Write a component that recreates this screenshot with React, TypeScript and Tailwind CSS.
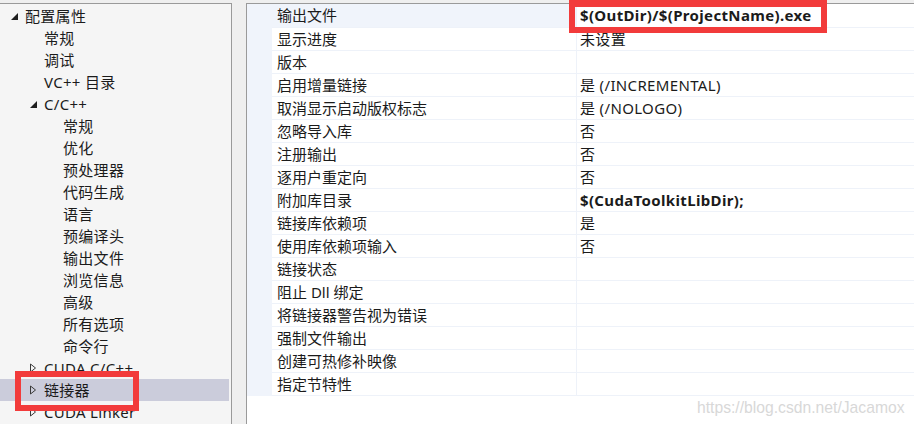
import React from 'react';

type TreeItem = { label: string; level: number; toggle?: 'open' | 'closed'; selected?: boolean };

const tree: TreeItem[] = [
  { label: '配置属性', level: 0, toggle: 'open' },
  { label: '常规', level: 1 },
  { label: '调试', level: 1 },
  { label: 'VC++ 目录', level: 1 },
  { label: 'C/C++', level: 1, toggle: 'open' },
  { label: '常规', level: 2 },
  { label: '优化', level: 2 },
  { label: '预处理器', level: 2 },
  { label: '代码生成', level: 2 },
  { label: '语言', level: 2 },
  { label: '预编译头', level: 2 },
  { label: '输出文件', level: 2 },
  { label: '浏览信息', level: 2 },
  { label: '高级', level: 2 },
  { label: '所有选项', level: 2 },
  { label: '命令行', level: 2 },
  { label: 'CUDA C/C++', level: 1, toggle: 'closed' },
  { label: '链接器', level: 1, toggle: 'closed', selected: true },
  { label: 'CUDA Linker', level: 1, toggle: 'closed' },
];

const props: { name: string; value?: string; bold?: boolean }[] = [
  { name: '输出文件', value: '$(OutDir)/$(ProjectName).exe', bold: true },
  { name: '显示进度', value: '未设置' },
  { name: '版本' },
  { name: '启用增量链接', value: '是 (/INCREMENTAL)' },
  { name: '取消显示启动版权标志', value: '是 (/NOLOGO)' },
  { name: '忽略导入库', value: '否' },
  { name: '注册输出', value: '否' },
  { name: '逐用户重定向', value: '否' },
  { name: '附加库目录', value: '$(CudaToolkitLibDir);', bold: true },
  { name: '链接库依赖项', value: '是' },
  { name: '使用库依赖项输入', value: '否' },
  { name: '链接状态' },
  { name: '阻止 Dll 绑定' },
  { name: '将链接器警告视为错误' },
  { name: '强制文件输出' },
  { name: '创建可热修补映像' },
  { name: '指定节特性' },
];

const font = { fontFamily: '"Noto Sans", "Noto Sans CJK SC", sans-serif' };

function Toggle({ kind }: { kind?: 'open' | 'closed' }) {
  if (kind === 'open') {
    return (
      <svg width="15" height="10" viewBox="0 0 15 10" className="shrink-0">
        <polygon points="1,9 8,9 8,2" fill="#1e1e1e" />
      </svg>
    );
  }
  if (kind === 'closed') {
    return (
      <svg width="15" height="10" viewBox="0 0 15 10" className="shrink-0">
        <polygon points="1.5,1 6.5,5 1.5,9" fill="none" stroke="#3a3a3a" strokeWidth="1" />
      </svg>
    );
  }
  return <span className="w-[15px] shrink-0" />;
}

export default function App() {
  return (
    <div
      className="relative flex h-[424px] w-[914px] overflow-hidden bg-[#efefef] pt-[3px] text-[15px] text-[#1b1b1b]"
      style={font}
    >
      {/* tree */}
      <div className="w-[232px] shrink-0 border-r border-t border-[#9a9a9a] bg-[#f5f5f5] pt-[1px]">
        {tree.map((t, i) => (
          <div
            key={i}
            className={`flex h-[22px] items-center leading-none ${t.selected ? 'mr-[2px] bg-[#cbccdb]' : ''}`}
            style={{ paddingLeft: 10 + t.level * 19 }}
          >
            <Toggle kind={t.toggle} />
            <span className="whitespace-nowrap tracking-[0.3px]">{t.label}</span>
          </div>
        ))}
      </div>

      {/* property grid */}
      <div className="ml-[14px] flex-1 border-l border-t border-[#9a9a9a] bg-white">
        {props.map((p, i) => (
          <div key={i} className={`flex leading-none ${i === 0 ? 'h-[24px]' : 'h-[23px]'}`}>
            <div className="w-[25px] shrink-0 bg-[#f0f4fb]" />
            <div
              className={`flex w-[305px] shrink-0 items-center border-b border-r border-[#eef2f9] pl-[5px] ${i === 0 ? 'bg-[#f0f4fb]' : ''}`}
            >
              {p.name}
            </div>
            <div
              className={`flex flex-1 items-center whitespace-nowrap border-b border-[#eef2f9] pl-[3px] tracking-[0.35px] ${p.bold ? 'font-bold' : ''}`}
            >
              {p.value}
            </div>
          </div>
        ))}
      </div>

      {/* annotation boxes */}
      <div className="absolute left-[15px] top-[371px] h-[40px] w-[124px] border-[6px] border-[#f23b3b]" />
      <div className="absolute left-[569px] top-0 h-[33px] w-[258px] border-[6px] border-t-[7px] border-[#f23b3b]" />

      <div
        className="absolute left-[697px] top-[396px] text-[15.7px] text-[#d8d8d8]"
        style={{ fontFamily: '"Liberation Sans", Arial, sans-serif' }}
      >
        https://blog.csdn.net/Jacamox
      </div>
    </div>
  );
}
